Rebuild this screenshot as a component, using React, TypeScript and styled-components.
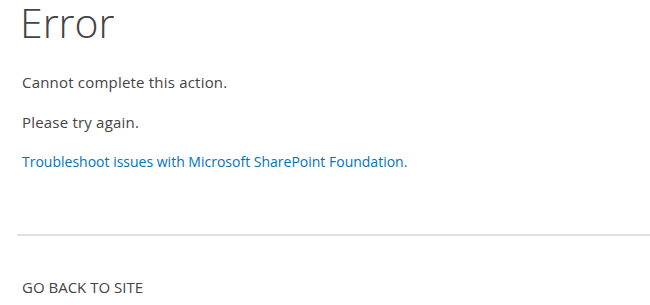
import React from 'react';
import styled, { createGlobalStyle } from 'styled-components';

const TEXT = '#444444';
const LINK = '#0072c6';
const RULE = '#e1e1e1';

const GlobalStyle = createGlobalStyle`
  html, body {
    margin: 0;
    padding: 0;
    background: #ffffff;
  }
  body {
    font-family: "Open Sans", "Noto Sans", "Liberation Sans", sans-serif;
    color: ${TEXT};
  }
`;

const Page = styled.div`
  display: flex;
  flex-direction: column;
  padding: 0 0 0 17px;
  width: 633px;
`;

const Content = styled.div`
  display: flex;
  flex-direction: column;
  padding-left: 5px;
`;

const Title = styled.h1`
  margin: 0 0 0 -2px;
  font-size: 41px;
  font-weight: 300;
  line-height: 44px;
  color: ${TEXT};
`;

const Messages = styled.div`
  display: flex;
  flex-direction: column;
  gap: 20px;
  margin-top: 28px;
`;

const Message = styled.p`
  margin: 0;
  font-size: 15px;
  letter-spacing: 0.2px;
  line-height: 20px;
`;

const Link = styled.a`
  font-size: 14px;
  line-height: 20px;
  color: ${LINK};
  text-decoration: none;
`;

const Divider = styled.hr`
  margin: 62px 0 0;
  border: 0;
  border-top: 2px solid ${RULE};
`;

const BackLink = styled.a`
  margin: 41px 0 0 5px;
  font-size: 15px;
  line-height: 20px;
  color: ${TEXT};
  text-transform: uppercase;
  text-decoration: none;
`;

const App = () => (
  <>
    <GlobalStyle />
    <Page>
      <Content>
        <Title>Error</Title>
        <Messages>
          <Message>Cannot complete this action.</Message>
          <Message>Please try again.</Message>
          <Link href="#">Troubleshoot issues with Microsoft SharePoint Foundation.</Link>
        </Messages>
      </Content>
      <Divider />
      <BackLink href="#">Go back to site</BackLink>
    </Page>
  </>
);

export default App;
